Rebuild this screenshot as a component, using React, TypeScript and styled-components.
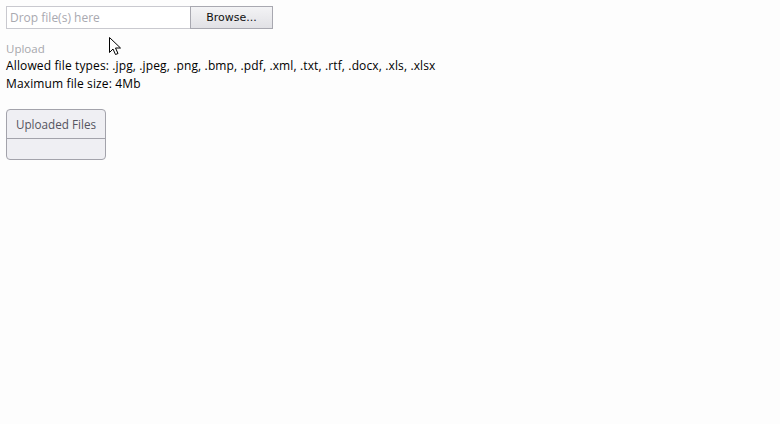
import React from "react";
import styled, { createGlobalStyle } from "styled-components";

const Global = createGlobalStyle`
  html, body { margin: 0; padding: 0; background: #fdfdfd; }
  body { font-family: "Open Sans", "Liberation Sans", sans-serif; font-size: 12px; color: #000; }
`;

const Page = styled.div`
  position: relative;
  width: 780px;
  height: 424px;
  padding: 6px;
  box-sizing: border-box;
`;

const UploadRow = styled.div`
  display: flex;
  width: 267px;
  height: 23px;
`;

const DropZone = styled.div`
  flex: 1;
  display: flex;
  align-items: center;
  padding-left: 3px;
  border: 1px solid #c9c9cf;
  border-right: none;
  background: #fff;
  color: #a9a9b0;
  font-size: 12px;
`;

const BrowseButton = styled.button`
  width: 83px;
  height: 23px;
  border: 1px solid #a8a8b0;
  background: linear-gradient(#f3f3f5, #e1e1e5);
  font-family: "DejaVu Sans", sans-serif;
  font-size: 11px;
  color: #111;
  padding: 0;
`;

const Info = styled.div`
  margin-top: 12px;
  display: flex;
  flex-direction: column;
`;

const Line = styled.div<{ $muted?: boolean }>`
  color: ${(p) => (p.$muted ? "#a7a7ac" : "#000")};
  font-size: ${(p) => (p.$muted ? "11.5px" : "12px")};
  letter-spacing: ${(p) => (p.$muted ? "0" : "0.13px")};
  line-height: ${(p) => (p.$muted ? "16px" : "18px")};
`;

const Panel = styled.div`
  margin-top: 16px;
  width: 98px;
  border: 1px solid #a3a3ab;
  border-radius: 4px;
  background: #efeff3;
  overflow: hidden;
`;

const PanelHeader = styled.div`
  height: 28px;
  display: flex;
  align-items: center;
  justify-content: center;
  border-bottom: 1px solid #a3a3ab;
  color: #555560;
  font-size: 11.7px;
`;

const PanelBody = styled.div`
  height: 20px;
`;

const Cursor = styled.svg`
  position: absolute;
  left: 109px;
  top: 37px;
`;

export default function App() {
  return (
    <>
      <Global />
      <Page>
        <UploadRow>
          <DropZone>Drop file(s) here</DropZone>
          <BrowseButton>Browse...</BrowseButton>
        </UploadRow>
        <Info>
          <Line $muted>Upload</Line>
          <Line>Allowed file types: .jpg, .jpeg, .png, .bmp, .pdf, .xml, .txt, .rtf, .docx, .xls, .xlsx</Line>
          <Line>Maximum file size: 4Mb</Line>
        </Info>
        <Panel>
          <PanelHeader>Uploaded Files</PanelHeader>
          <PanelBody />
        </Panel>
        <Cursor width="13" height="19" viewBox="0 0 13 19">
          <path d="M0.5 0.5 L0.5 15.5 L4 12 L6.5 17.5 L9 16.5 L6.5 11 L11.5 11 Z" fill="#fff" stroke="#000" strokeWidth="1" />
        </Cursor>
      </Page>
    </>
  );
}
